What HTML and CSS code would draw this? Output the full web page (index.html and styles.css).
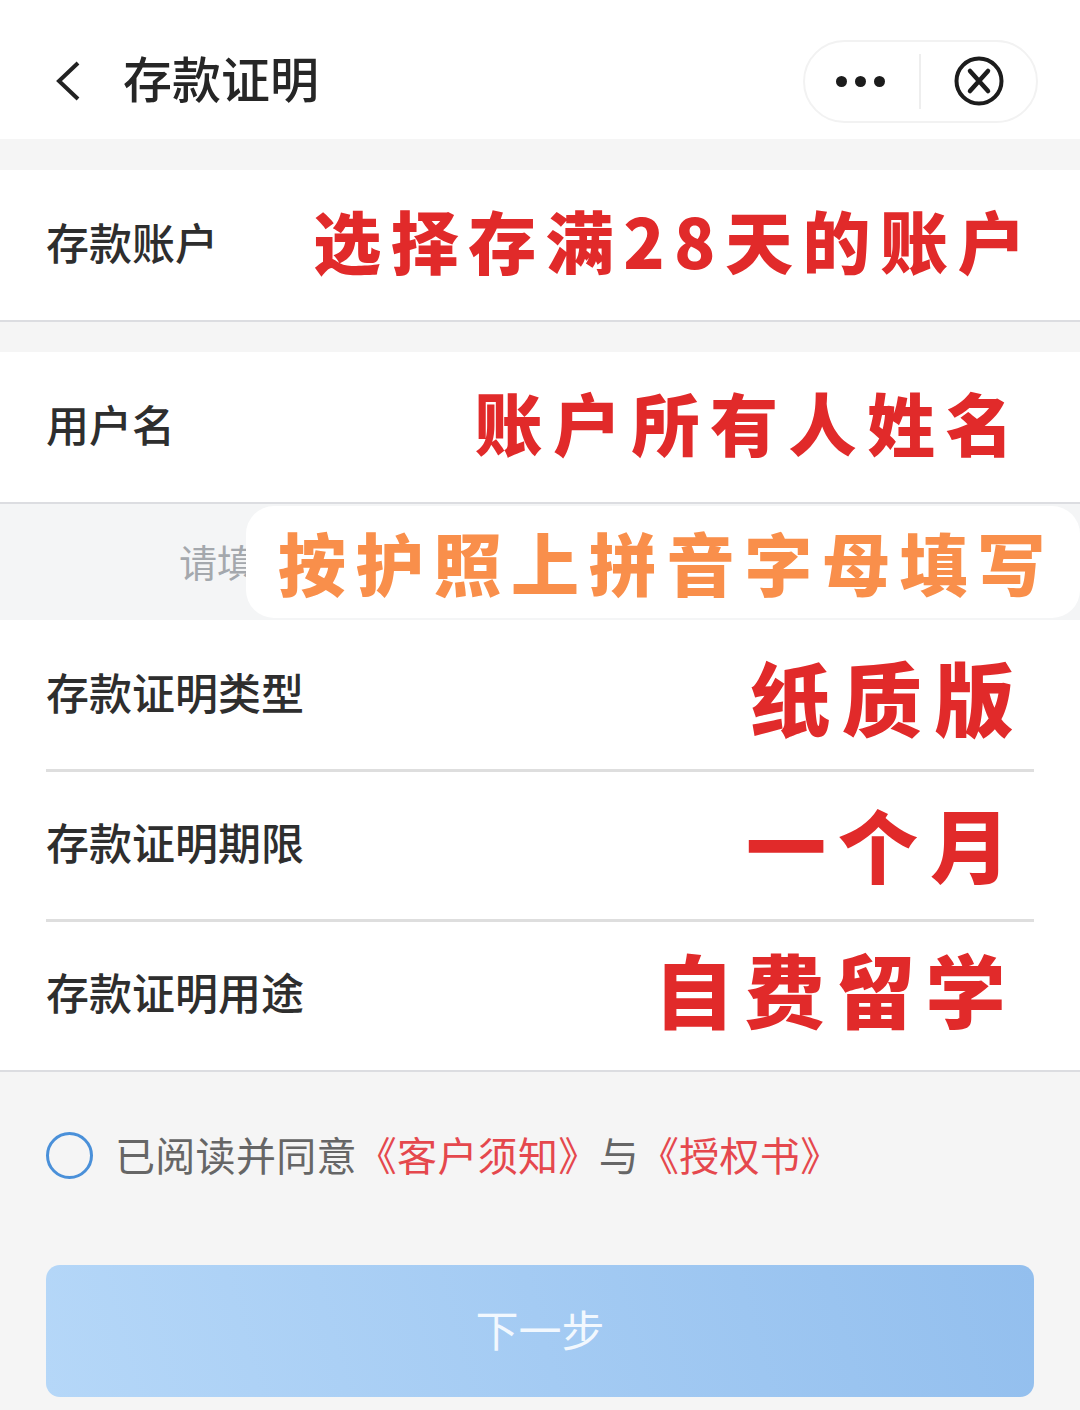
FILE: index.html
```html
<!DOCTYPE html>
<html lang="zh-CN">
<head>
  <meta charset="UTF-8">
  <meta name="viewport" content="width=device-width, initial-scale=1.0">
  <title>存款证明</title>
  <link rel="stylesheet" href="styles.css">
</head>
<body>
  <header class="topbar">
    <svg class="back" width="26" height="40" viewBox="0 0 26 40">
      <path d="M23 2 L4 20 L23 38" fill="none" stroke="#222" stroke-width="4"/>
    </svg>
    <h1>存款证明</h1>
    <div class="capsule">
      <div class="capsule-more"><i></i><i></i><i></i></div>
      <div class="capsule-line"></div>
      <div class="capsule-close">
        <svg width="50" height="50" viewBox="0 0 50 50">
          <circle cx="25" cy="25" r="22.5" fill="none" stroke="#1c1c1c" stroke-width="4"/>
          <path d="M16 15 L34 35 M34 15 L16 35" fill="none" stroke="#1c1c1c" stroke-width="4.5" stroke-linecap="round"/>
        </svg>
      </div>
    </div>
  </header>

  <section class="group group-first">
    <div class="row">
      <span class="label">存款账户</span>
      <span class="note note-account">选择存满28天的账户</span>
    </div>
  </section>

  <section class="group">
    <div class="row">
      <span class="label">用户名</span>
      <span class="note note-name">账户所有人姓名</span>
    </div>
  </section>

  <div class="hint">
    <span class="hint-text">请填写</span>
    <div class="hint-cover">按护照上拼音字母填写</div>
  </div>

  <section class="group group-list">
    <div class="row row-line">
      <span class="label">存款证明类型</span>
      <span class="note note-big note-type">纸质版</span>
    </div>
    <div class="row row-line">
      <span class="label">存款证明期限</span>
      <span class="note note-big note-term">一个月</span>
    </div>
    <div class="row">
      <span class="label">存款证明用途</span>
      <span class="note note-big note-use">自费留学</span>
    </div>
  </section>

  <div class="agree">
    <span class="radio"></span>
    <p>已阅读并同意<a>《客户须知》</a>与<a>《授权书》</a></p>
  </div>

  <div class="next-wrap">
    <button class="next">下一步</button>
  </div>
</body>
</html>
```

FILE: styles.css
```css
* {
  box-sizing: border-box;
}
body {
  margin: 0;
  background: #f5f5f5;
  font-family: "Noto Sans CJK SC", "Noto Sans", sans-serif;
  color: #2b2b2b;
  height: 1410px;
  overflow: hidden;
}
.topbar {
  height: 139px;
  background: #fff;
  display: flex;
  align-items: center;
  padding: 14px 42px 0 55px;
}
.back {
  margin-top: 8px;
}
.topbar h1 {
  margin: 0 0 0 42px;
  font-size: 49px;
  font-weight: 500;
  color: #262626;
  flex: 1;
}
.capsule {
  width: 235px;
  height: 83px;
  margin-top: 9px;
  border: 2px solid #f2f2f2;
  border-radius: 42px;
  display: flex;
  align-items: center;
}
.capsule-more {
  width: 114px;
  padding-right: 3px;
  display: flex;
  justify-content: center;
  gap: 8px;
}
.capsule-more i {
  width: 11px;
  height: 11px;
  border-radius: 50%;
  background: #1c1c1c;
}
.capsule-line {
  width: 2px;
  height: 55px;
  background: #eee;
}
.capsule-close {
  flex: 1;
  display: flex;
  justify-content: center;
}
.group {
  background: #fff;
  margin-top: 30px;
  border-bottom: 2px solid #dcdde1;
}
.group-first {
  margin-top: 31px;
}
.group-list {
  margin-top: 0;
}
.row {
  height: 150px;
  display: flex;
  align-items: center;
  justify-content: space-between;
  padding: 0 46px 8px;
}
.row-line {
  position: relative;
}
.row-line::after {
  content: "";
  position: absolute;
  left: 46px;
  right: 46px;
  bottom: -2px;
  height: 3px;
  background: #dedede;
}
.label {
  font-size: 43px;
  font-weight: 500;
  color: #2e2e2e;
}
.note {
  font-size: 68px;
  font-weight: 900;
  letter-spacing: 9.5px;
  color: #e12a2a;
  white-space: nowrap;
}
.note-account {
  margin: 0 -1px 4px 0;
}
.note-name {
  letter-spacing: 10.5px;
  margin: 0 10px 4px 0;
}
.note-big {
  font-size: 80px;
  letter-spacing: 12px;
}
.note-type {
  margin: 8px 8px 0 0;
}
.note-term {
  margin: 2px 12px 0 0;
}
.note-use {
  margin: 0 18px 8px 0;
  letter-spacing: 10.5px;
}
.hint {
  position: relative;
  height: 116px;
  display: flex;
  align-items: center;
  padding: 0 0 4px 179px;
  background: #f4f5f6;
}
.hint-text {
  font-size: 38px;
  color: #a4a8ad;
}
.hint-cover {
  position: absolute;
  left: 246px;
  right: 0;
  top: 2px;
  bottom: 2px;
  background: #fff;
  border-radius: 28px;
  display: flex;
  align-items: center;
  padding: 0 0 2px 32px;
  font-size: 68px;
  font-weight: 900;
  letter-spacing: 9.7px;
  color: #f98f4b;
  white-space: nowrap;
}
.agree {
  display: flex;
  align-items: center;
  padding: 53px 46px 0;
}
.radio {
  width: 47px;
  height: 47px;
  margin-top: 2px;
  border: 3px solid #4a90d9;
  border-radius: 50%;
  flex: none;
}
.agree p {
  margin: 0 0 0 22px;
  font-size: 40px;
  letter-spacing: 0.3px;
  color: #666;
  white-space: nowrap;
}
.agree a {
  color: #e5484d;
}
.next-wrap {
  padding: 82px 46px 0;
}
.next {
  display: block;
  width: 100%;
  height: 132px;
  padding: 0 0 6px;
  border: none;
  border-radius: 14px;
  background: linear-gradient(75deg, #b5d7f8, #93bfee);
  color: #f2f8fe;
  font-family: inherit;
  font-size: 43px;
}
```
